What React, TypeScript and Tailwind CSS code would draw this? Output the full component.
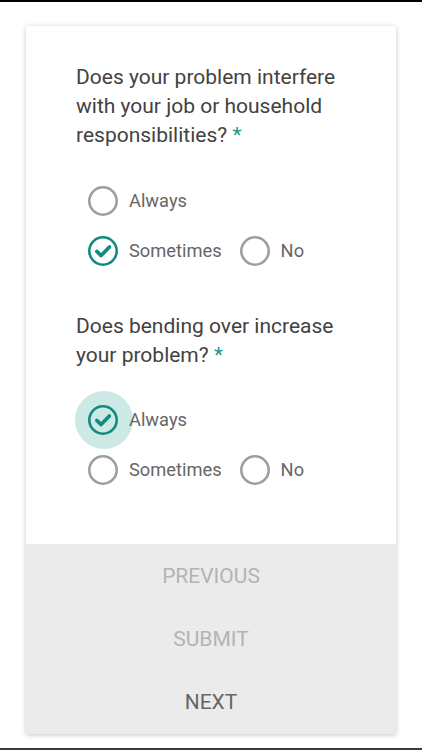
import React from 'react';

type Option = { label: string; checked?: boolean; focused?: boolean };

function Radio({ label, checked, focused }: Option) {
  return (
    <div className="flex items-center h-[50px]">
      <div className="relative w-[30px] h-[30px] flex items-center justify-center">
        {focused && <span className="absolute w-[58px] h-[58px] rounded-full bg-[#cde9e6] left-[-13px] top-[-14px]"></span>}
        <svg viewBox="0 0 30 30" className="relative w-[30px] h-[30px]">
          <circle cx="15" cy="15" r="13.7" fill="none" stroke={checked ? '#138a7e' : '#9e9e9e'} strokeWidth="2.6" />
          {checked && <path d="M8.8 15.4l4.3 4.2 8.3-8.6" fill="none" stroke="#138a7e" strokeWidth="3.6" strokeLinecap="round" strokeLinejoin="round" />}
        </svg>
      </div>
      <span className="relative ml-[11px] text-[18.3px] text-[#666666]">{label}</span>
    </div>
  );
}

function Question({ title, rows }: { title: string; rows: Option[][] }) {
  return (
    <div>
      <p className="text-[21px] leading-[29px] text-[#424242] pr-[30px]">
        {title}&nbsp;<span className="text-[#1a9a8c]">*</span>
      </p>
      <div className="mt-[25.5px] pl-[12px]">
        {rows.map((row, i) => (
          <div key={i} className="flex gap-[18px]">
            {row.map((o) => <Radio key={o.label} {...o} />)}
          </div>
        ))}
      </div>
    </div>
  );
}

export default function App() {
  return (
    <div className="w-[422px] h-[750px] bg-white flex flex-col font-['Roboto',sans-serif] overflow-hidden">
      <div className="h-[2px] bg-black"></div>
      <div className="flex-1 pt-[24px] px-[26px]">
        <div className="bg-white shadow-[0_1px_5px_rgba(0,0,0,0.22)]">
          <div className="pt-[37px] pb-[49px] pl-[50px] flex flex-col gap-[36px]">
            <Question
              title="Does your problem interfere with your job or household responsibilities?"
              rows={[[{ label: 'Always' }], [{ label: 'Sometimes', checked: true }, { label: 'No' }]]}
            />
            <Question
              title="Does bending over increase your problem?"
              rows={[[{ label: 'Always', checked: true, focused: true }], [{ label: 'Sometimes' }, { label: 'No' }]]}
            />
          </div>
          <div className="bg-[#ebebeb] flex flex-col pt-[1px]">
            <button className="h-[63px] text-[21px] uppercase text-[#b3b3b3]">Previous</button>
            <button className="h-[63px] text-[21px] uppercase text-[#b3b3b3]">Submit</button>
            <button className="h-[63px] text-[21px] uppercase text-[#666666]">Next</button>
          </div>
        </div>
      </div>
      <div className="h-[2px] bg-[#3c3c3c]"></div>
    </div>
  );
}
